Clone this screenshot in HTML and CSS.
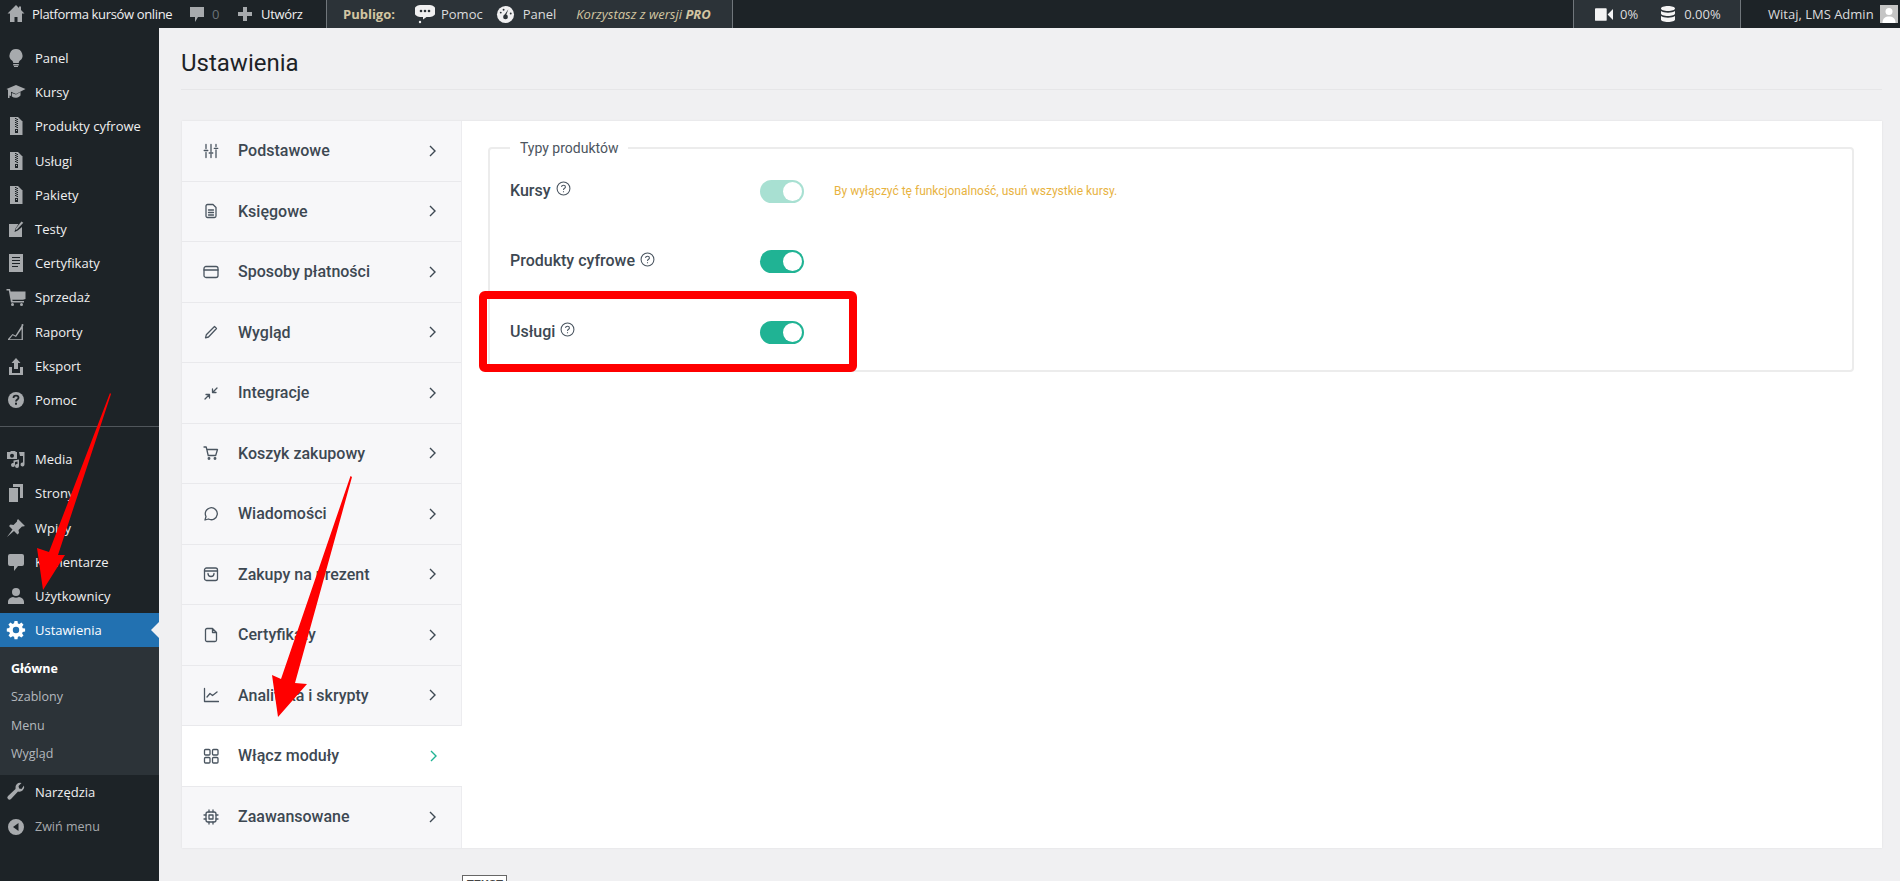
FILE: index.html
```html
<!DOCTYPE html>
<html lang="pl">
<head>
<meta charset="utf-8">
<title>Ustawienia</title>
<link rel="stylesheet" href="styles.css">
</head>
<body>
<header class="topbar">
  <div class="tb-group tb-site">
    <svg class="tb-icon home" viewBox="0 0 20 20"><path d="M10 1 1.5 9.5H4V18h4.5v-5h3v5H16V9.500h2.500L15 6V2.500h-2v1.500z"/></svg>
    <span>Platforma kursów online</span>
  </div>
  <div class="tb-group tb-comments">
    <svg class="tb-icon" viewBox="0 0 20 20"><path d="M3 3h14v10h-6l-3 5v-5H3z"/></svg>
    <span class="muted">0</span>
  </div>
  <div class="tb-group tb-new">
    <svg class="tb-icon" viewBox="0 0 20 20"><path d="M8 3h4v5h5v4h-5v5H8v-5H3V8h5z"/></svg>
    <span>Utwórz</span>
  </div>
  <div class="tb-publigo">
    <strong class="tan">Publigo:</strong>
    <span class="tb-item help-item"><svg class="tb-icon large" viewBox="0 0 20 20"><path d="M5 1h10a5 5 0 0 1 0 12h-3.500L8 15.500V13H5A5 5 0 0 1 5 1z"/><circle cx="6" cy="7" r="1.300" fill="#2c3338"/><circle cx="10" cy="7" r="1.300" fill="#2c3338"/><circle cx="14" cy="7" r="1.300" fill="#2c3338"/><circle cx="5" cy="18" r="1.200"/></svg>Pomoc</span>
    <span class="tb-item panel-item"><svg class="tb-icon gauge" viewBox="0 0 20 20"><circle cx="10" cy="10" r="9"/><path d="M13 4.500 10.500 11 8.800 10.500z" fill="#2c3338"/><circle cx="10" cy="12.500" r="2.500" fill="#2c3338"/><circle cx="5" cy="8" r="1" fill="#2c3338"/><circle cx="8" cy="5" r="1" fill="#2c3338"/><circle cx="15.500" cy="9" r="1" fill="#2c3338"/></svg>Panel</span>
    <em class="tan pro">Korzystasz z wersji <b>PRO</b></em>
  </div>
  <div class="tb-spacer"></div>
  <div class="tb-stats">
    <span class="tb-stat"><svg class="tb-icon video" viewBox="0 0 20 14"><rect x="0" y="0" width="13" height="14" rx="1"/><path d="M20 1v12l-6-6z"/></svg>0%</span>
    <span class="tb-stat"><svg class="tb-icon db" viewBox="0 0 14 16"><path d="M0 2.500C0 1 3 0 7 0s7 1 7 2.500S11 5 7 5 0 4 0 2.500zM0 5c1.500 1.200 4 1.700 7 1.700S12.500 6.200 14 5v2.500C14 9 11 10 7 10S0 9 0 7.500zM0 10c1.500 1.200 4 1.700 7 1.700s5.500-.5 7-1.700v3.500C14 15 11 16 7 16s-7-1-7-2.500z"/></svg>0.00%</span>
  </div>
  <div class="tb-user">
    <span>Witaj, LMS Admin</span>
    <svg class="avatar" viewBox="0 0 18 18"><rect width="18" height="18" fill="#c4c4c4"/><circle cx="9" cy="6.500" r="3.500" fill="#fff"/><path d="M2.500 18c0-5 3-6.500 6.500-6.500s6.500 1.500 6.500 6.500z" fill="#fff"/></svg>
  </div>
</header>

<div class="layout">
  <nav class="sidebar">
    <ul class="menu">
      <li class="menu-item"><svg class="mi" viewBox="0 0 20 20"><path d="M10 1a6.500 6.500 0 0 0-4 11.600c.9.700 1.200 1.500 1.200 2.400h5.600c0-.9.300-1.700 1.200-2.400A6.500 6.500 0 0 0 10 1zM7.200 16h5.600v1.500H7.200zM8 18h4v1H8z"/></svg>Panel</li>
      <li class="menu-item"><svg class="mi" viewBox="0 0 20 20"><path d="M10 3 .5 7 2 7.700V16h1.500v-2.500L5 14V9.700l5 2.300 9.500-5zM5.800 11v3.500c1.500 1 3 1.400 4.700 1.200 1.500-.2 3-1 4-2.200v-3.600L10 12.600z"/></svg>Kursy</li>
      <li class="menu-item"><svg class="mi" viewBox="0 0 20 20"><use href="#zip"/></svg>Produkty cyfrowe</li>
      <li class="menu-item"><svg class="mi" viewBox="0 0 20 20"><use href="#zip"/></svg>Usługi</li>
      <li class="menu-item"><svg class="mi" viewBox="0 0 20 20"><use href="#zip"/></svg>Pakiety</li>
      <li class="menu-item"><svg class="mi" viewBox="0 0 20 20"><path d="M3 5h9.500L9.500 9.500 8.500 13l3.300-1.500L16 8v10H3z"/><path d="M15.500 2.500l1.800 1.300-6.300 6.700-1.500.6.300-1.600z"/></svg>Testy</li>
      <li class="menu-item"><svg class="mi" viewBox="0 0 20 20"><path fill-rule="evenodd" d="M3 1h14v18H3zM6 4v1h8V4zm0 3v1h8V7zm0 3v1h8v-1zm0 3v1h6v-1z"/></svg>Certyfikaty</li>
      <li class="menu-item"><svg class="mi" viewBox="0 0 20 20"><path d="M.5 2H4l.6 2.500H19.500V12l-2.500.8H6.300l.3 1.200H18v1.500H5L2.800 3.500H.5z"/><circle cx="6.500" cy="17.500" r="1.500"/><circle cx="15.500" cy="17.500" r="1.500"/></svg>Sprzedaż</li>
      <li class="menu-item"><svg class="mi" viewBox="0 0 20 20"><path d="M2 18v-1l4.500-5 3 1.500 6.500-10.500.9.400V18zm1.600-.8h12V7l-5.600 8-3.300-1.700z"/><circle cx="16.500" cy="3" r="1"/></svg>Raporty</li>
      <li class="menu-item"><svg class="mi" viewBox="0 0 20 20"><path d="M10 2l4.500 5H12v6H8V7H5.500zM3 11h3v6h8v-6h3v8H3z"/></svg>Eksport</li>
      <li class="menu-item"><svg class="mi" viewBox="0 0 20 20"><circle cx="10" cy="10" r="8"/><path d="M7.500 8c0-1.500 1-2.300 2.500-2.300s2.500.8 2.500 2.100c0 1.700-2.500 1.800-2.500 3.700" fill="none" stroke="#1d2327" stroke-width="1.800"/><rect x="9" y="12.700" width="2" height="2" fill="#1d2327"/></svg>Pomoc</li>
    </ul>
    <div class="menu-sep"></div>
    <ul class="menu">
      <li class="menu-item"><svg class="mi" viewBox="0 0 20 20"><path fill-rule="evenodd" d="M1 3h3l1-1h4l1 1h1v7H1zm5 1.800a2 2 0 1 0 0 4 2 2 0 0 0 0-4z"/><path d="M13 3h5.500v12.500a2 2 0 1 1-1.500-2V7h-3zM7.500 11.500l5.500-1v6.500a2 2 0 1 1-1.500-2v-2.500l-2.500.5v3a2 2 0 1 1-1.500-2z"/></svg>Media</li>
      <li class="menu-item"><svg class="mi" viewBox="0 0 20 20"><path d="M7 1h10v14h-3V4H7zM3 5h9v14H3z"/></svg>Strony</li>
      <li class="menu-item"><svg class="mi" viewBox="0 0 20 20"><path d="M12 1l7 7-2 .5-1 0-3.500 3.500.5 3-1.500 1.500-3.500-3.500L1 19l5.500-7.500L3 8l1.500-1.500 3 .5L11 3.500V2.500z"/></svg>Wpisy</li>
      <li class="menu-item"><svg class="mi" viewBox="0 0 20 20"><path d="M4 2h12a2 2 0 0 1 2 2v8a2 2 0 0 1-2 2h-4l-4 5v-5H4a2 2 0 0 1-2-2V4a2 2 0 0 1 2-2z"/></svg>Komentarze</li>
      <li class="menu-item"><svg class="mi" viewBox="0 0 20 20"><circle cx="10" cy="6" r="4"/><path d="M2 18v-2c0-3 2.500-4.500 5-5 1.800 1 4.200 1 6 0 2.500.5 5 2 5 5v2z"/></svg>Użytkownicy</li>
      <li class="menu-item current"><svg class="mi" viewBox="0 0 20 20"><path fill-rule="evenodd" d="M8.500 1h3l.4 2.400 1.500.6 2-1.400 2.100 2.100-1.400 2 .6 1.500 2.400.4v3l-2.400.4-.6 1.500 1.400 2-2.100 2.100-2-1.400-1.500.6-.4 2.400h-3l-.4-2.400-1.500-.6-2 1.400-2.100-2.100 1.400-2-.6-1.500L.8 11.500v-3l2.400-.4.6-1.500-1.400-2 2.100-2.100 2 1.400 1.500-.6zM10 6.800a3.200 3.200 0 1 0 0 6.400 3.200 3.200 0 0 0 0-6.400z"/></svg>Ustawienia</li>
      <li>
        <ul class="submenu">
          <li class="sub-item active">Główne</li>
          <li class="sub-item">Szablony</li>
          <li class="sub-item">Menu</li>
          <li class="sub-item">Wygląd</li>
        </ul>
      </li>
      <li class="menu-item"><svg class="mi" viewBox="0 0 20 20"><path d="M18 3.500a4.800 4.800 0 0 1-6 6L5 17a2.100 2.100 0 0 1-3-3l7.500-7a4.800 4.800 0 0 1 6-6l-3 3 .6 2.400 2.400.6z"/></svg>Narzędzia</li>
      <li class="menu-item collapse"><svg class="mi" viewBox="0 0 20 20"><path fill-rule="evenodd" d="M10 2a8 8 0 1 1 0 16 8 8 0 0 1 0-16zm2.500 4L7 10l5.500 4z"/></svg>Zwiń menu</li>
    </ul>
  </nav>

  <main class="main">
    <h1 class="page-title">Ustawienia</h1>
    <section class="card">
      <ul class="tabs">
        <li class="tab"><svg class="ti" viewBox="0 0 16 16"><path d="M3 1.500v4M3 9.500v5M1.200 7.500h3.600M8 1.500v7M8 11.500v3M6.200 10h3.600M13 1.500v2M13 7v7.500M11.200 5.300h3.600"/></svg><span>Podstawowe</span><svg class="chev" viewBox="0 0 10 14"><path d="M2 2l5 5-5 5"/></svg></li>
        <li class="tab"><svg class="ti" viewBox="0 0 16 16"><path d="M3 3a1.500 1.500 0 0 1 1.500-1.500H10L13 4.500V13a1.500 1.500 0 0 1-1.500 1.500h-7A1.500 1.500 0 0 1 3 13zM5.500 7h5M5.500 9.500h5M5.500 12h5"/></svg><span>Księgowe</span><svg class="chev" viewBox="0 0 10 14"><path d="M2 2l5 5-5 5"/></svg></li>
        <li class="tab"><svg class="ti" viewBox="0 0 16 16"><rect x="1" y="2.500" width="14" height="11" rx="2"/><path d="M1 6h14"/></svg><span>Sposoby płatności</span><svg class="chev" viewBox="0 0 10 14"><path d="M2 2l5 5-5 5"/></svg></li>
        <li class="tab"><svg class="ti" viewBox="0 0 16 16"><path d="M11.500 2.500l2 2-8 8.500-3 .8.800-3z"/></svg><span>Wygląd</span><svg class="chev" viewBox="0 0 10 14"><path d="M2 2l5 5-5 5"/></svg></li>
        <li class="tab"><svg class="ti" viewBox="0 0 16 16"><path d="M2 14l4.500-4.500M3 9.500h3.500V13M14 3L9.500 7.500M13 7.500H9.500V4"/></svg><span>Integracje</span><svg class="chev" viewBox="0 0 10 14"><path d="M2 2l5 5-5 5"/></svg></li>
        <li class="tab"><svg class="ti" viewBox="0 0 16 16"><path d="M1 2h2.200l2 8.500h7.500L14.500 4.500H3.700"/><circle cx="6" cy="13.500" r=".8"/><circle cx="12" cy="13.500" r=".8"/></svg><span>Koszyk zakupowy</span><svg class="chev" viewBox="0 0 10 14"><path d="M2 2l5 5-5 5"/></svg></li>
        <li class="tab"><svg class="ti" viewBox="0 0 16 16"><path d="M2 14l1-3.500A6 6 0 1 1 5.500 13z"/></svg><span>Wiadomości</span><svg class="chev" viewBox="0 0 10 14"><path d="M2 2l5 5-5 5"/></svg></li>
        <li class="tab"><svg class="ti" viewBox="0 0 16 16"><rect x="1.500" y="2" width="13" height="12.500" rx="2"/><path d="M1.500 5h13M5 7.500c0 4 6 4 6 0"/></svg><span>Zakupy na prezent</span><svg class="chev" viewBox="0 0 10 14"><path d="M2 2l5 5-5 5"/></svg></li>
        <li class="tab"><svg class="ti" viewBox="0 0 16 16"><path d="M2.500 3a1.500 1.500 0 0 1 1.500-1.500h5.500l4 4V13a1.500 1.500 0 0 1-1.500 1.500H4A1.500 1.500 0 0 1 2.500 13zM9.500 1.500v4h4"/></svg><span>Certyfikaty</span><svg class="chev" viewBox="0 0 10 14"><path d="M2 2l5 5-5 5"/></svg></li>
        <li class="tab"><svg class="ti" viewBox="0 0 16 16"><path d="M1.500 1.500v13h14M4 10l3-3.500 2.500 2L14 5"/></svg><span>Analityka i skrypty</span><svg class="chev" viewBox="0 0 10 14"><path d="M2 2l5 5-5 5"/></svg></li>
        <li class="tab selected"><svg class="ti" viewBox="0 0 16 16"><rect x="1.500" y="1.500" width="5.500" height="5.500" rx="1"/><rect x="9.500" y="1.500" width="5.500" height="5.500" rx="1"/><rect x="1.500" y="9.500" width="5.500" height="5.500" rx="1"/><rect x="9.500" y="9.500" width="5.500" height="5.500" rx="1"/></svg><span>Włącz moduły</span><svg class="chev" viewBox="0 0 10 14"><path d="M2 2l5 5-5 5"/></svg></li>
        <li class="tab"><svg class="ti" viewBox="0 0 16 16"><rect x="3" y="3" width="10" height="10" rx="2"/><rect x="6" y="6" width="4" height="4"/><path d="M6 1v2M10 1v2M6 13v2M10 13v2M1 6h2M1 10h2M13 6h2M13 10h2"/></svg><span>Zaawansowane</span><svg class="chev" viewBox="0 0 10 14"><path d="M2 2l5 5-5 5"/></svg></li>
      </ul>
      <div class="pane">
        <fieldset class="group">
          <legend>Typy produktów</legend>
          <div class="row">
            <div class="row-label"><span class="label-text">Kursy</span><svg class="help" viewBox="0 0 14 14"><circle cx="7" cy="7" r="6"/><path d="M5.200 5.500C5.200 4.500 6 4 7 4s1.800.6 1.800 1.500C8.800 6.800 7 6.800 7 8.300M7 9.600v.8"/></svg></div>
            <div class="toggle disabled"><i></i></div>
            <p class="hint">By wyłączyć tę funkcjonalność, usuń wszystkie kursy.</p>
          </div>
          <div class="row">
            <div class="row-label"><span class="label-text">Produkty cyfrowe</span><svg class="help" viewBox="0 0 14 14"><circle cx="7" cy="7" r="6"/><path d="M5.200 5.500C5.200 4.500 6 4 7 4s1.800.6 1.800 1.500C8.800 6.800 7 6.800 7 8.300M7 9.600v.8"/></svg></div>
            <div class="toggle"><i></i></div>
          </div>
          <div class="row">
            <div class="row-label"><span class="label-text">Usługi</span><svg class="help" viewBox="0 0 14 14"><circle cx="7" cy="7" r="6"/><path d="M5.200 5.500C5.200 4.500 6 4 7 4s1.800.6 1.800 1.500C8.800 6.800 7 6.800 7 8.300M7 9.600v.8"/></svg></div>
            <div class="toggle"><i></i></div>
          </div>
        </fieldset>
      </div>
    </section>
    <div class="peek"><span>TEKST</span></div>
  </main>
</div>

<div class="highlight"></div>
<svg class="arrows" viewBox="0 0 1900 881">
  <path d="M110 393 111 394 58 555 65 555 43 590 37 548 49 552z"/>
  <path d="M350.500 476 352 477 295 683 307 684 278 717 272 675 281 679z"/>
</svg>

<svg class="defs" width="0" height="0">
  <symbol id="zip" viewBox="0 0 20 20">
    <path d="M4 1h8l4.500 4.500V19H4z"/>
    <path d="M9 2v1h1.500V2zm1.500 1v1H12V3zM9 4v1h1.500V4zm1.500 1v1H12V5zM9 6v1h1.500V6zm1.500 1v1H12V7zM9 8v1h1.500V8zm1.500 1v1H12V9zM9 10v1h1.500v-1zm1.500 1v1H12v-1zM9 13h3v4H9zm1 1v1h1v-1z" fill="#1d2327"/>
  </symbol>
</svg>
</body>
</html>
```

FILE: styles.css
```css
* { box-sizing: border-box; }
html, body { margin: 0; height: 881px; overflow: hidden; }
body { background: #f0f0f2; font-family: "Open Sans", "Liberation Sans", sans-serif; color: #3c434a; position: relative; }
ul { list-style: none; margin: 0; padding: 0; }

.topbar { height: 28px; background: #1d2327; color: #f0f0f1; display: flex; align-items: stretch; font-size: 13px; line-height: 28px; }
.tb-group { display: flex; align-items: center; }
.tb-icon { fill: #a7aaad; width: 20px; height: 20px; flex: none; }
.tb-site { padding-left: 6px; gap: 6px; width: 181px; }
.tb-site span { white-space: nowrap; letter-spacing: -.35px; }
.tb-comments { width: 49px; gap: 5px; padding-left: 6px; }
.muted { color: #6a7278; }
.tb-new { gap: 6px; width: 96px; padding-left: 5px; letter-spacing: -.3px; }
.tb-publigo { width: 407px; background: #2c3338; border-left: 1px solid #70767b; border-right: 1px solid #70767b; display: flex; align-items: center; padding-left: 16px; }
.tan { color: #d3c6a2; }
.tb-publigo strong { font-family: "Open Sans", sans-serif; font-weight: 700; margin-right: 20px; }
.tb-item { display: flex; align-items: center; gap: 6px; color: #dcdcde; }
.help-item { margin-right: 13px; }
.panel-item { gap: 8px; margin-right: 16px; }
.tb-item .tb-icon { fill: #f0f0f1; }
.tb-icon.gauge { width: 19px; height: 19px; }
.pro { font-size: 13px; margin-left: 4px; }
.pro b { font-weight: 700; }
.tb-spacer { flex: 1; }
.tb-stats { width: 168px; background: #2c3338; border-left: 1px solid #70767b; border-right: 1px solid #70767b; display: flex; align-items: center; padding-left: 21px; gap: 23px; }
.tb-stat { display: flex; align-items: center; gap: 7px; color: #dcdcde; }
.tb-stat .tb-icon { fill: #f4f4f4; }
.tb-icon.video { width: 18px; height: 13px; }
.tb-icon.db { width: 14px; height: 18px; margin-right: 2px; }
.tb-user { display: flex; align-items: center; gap: 6px; width: 159px; padding-left: 27px; color: #dcdcde; }
.avatar { width: 18px; height: 18px; }

.layout { display: flex; height: 853px; }
.sidebar { width: 159px; flex: none; background: #1d2327; padding-top: 13px; color: #f0f0f1; font-size: 13px; }
.menu-item { height: 34.200px; display: flex; align-items: center; padding-left: 6px; gap: 9px; position: relative; white-space: nowrap; }
.mi { width: 20px; height: 20px; fill: #a7aaad; flex: none; }
.menu-sep { height: 1px; background: #50565b; margin: 9px 0 15px; }
.menu-item.current { background: #2271b1; color: #fff; }
.menu-item.current .mi { fill: #fff; }
.menu-item.current::after { content: ""; position: absolute; right: 0; top: 9px; border: 8px solid transparent; border-right-color: #f0f0f2; border-left: 0; }
.submenu { background: #2c3338; padding: 8px 0 7px; }
.sub-item { height: 28.300px; line-height: 28px; padding-left: 11px; font-size: 12.500px; color: #b4b9be; }
.sub-item.active { color: #fff; font-weight: 700; }
.menu-item.collapse { color: #a7aaad; font-size: 12.500px; }

.main { flex: 1; min-width: 0; padding: 0 18px 0 22px; }
.page-title { margin: 0 0 31px; height: 62px; font: 400 24px/70px Roboto, sans-serif; color: #1d2327; border-bottom: 1px solid #e6e6e8; padding: 0; }
.card { margin-left: 1px; display: flex; height: 727px; background: #fff; box-shadow: 0 0 2px rgba(0, 0, 0, .08); font-family: Roboto, sans-serif; }
.tabs { width: 280px; flex: none; background: #f7f7f9; border-right: 1px solid #ececef; }
.tab { height: 60.500px; display: flex; align-items: center; padding: 0 23px 0 21px; border-bottom: 1px solid #e9e9ec; font-size: 16px; font-weight: 500; color: #3d4852; }
.tab:last-child { border-bottom: 0; }
.tab.selected { background: #fff; margin-right: -1px; }
.tab span { flex: 1; margin-left: 19px; }
.ti { width: 16px; height: 16px; fill: none; stroke: #4a5560; stroke-width: 1.300; stroke-linecap: round; stroke-linejoin: round; flex: none; }
.chev { width: 10px; height: 14px; fill: none; stroke: #3d4852; stroke-width: 1.400; flex: none; }
.tab.selected .chev { stroke: #20b394; }

.pane { flex: 1; padding: 19px 28px 0 26px; }
.group { margin: 0; height: 232px; border: 2px solid #ececec; border-radius: 4px; padding: 0 0 0 20px; min-width: 0; }
.group legend { margin-left: 0; padding: 0 10px; font-size: 14px; line-height: 16px; color: #4c5560; }
.row { display: flex; align-items: center; height: 70.500px; }
.row-label { width: 250px; font-size: 16px; font-weight: 500; color: #3d4852; display: flex; align-items: center; padding-bottom: 2px; }
.help { width: 15px; height: 15px; margin: -3px 0 0 5px; fill: none; stroke: #4a5560; stroke-width: 1; }
.toggle { width: 44px; height: 23px; border-radius: 12px; background: #20b394; padding: 2px; display: flex; justify-content: flex-end; }
.toggle i { display: block; width: 19px; height: 19px; border-radius: 50%; background: #fff; }
.toggle.disabled { background: #a8e0d2; }
.hint { margin: 0 0 0 30px; font-size: 12px; color: #e8b33f; }

.peek { margin: 27px 0 0 281px; width: 45px; height: 24px; background: #fff; border: 1px solid #666; padding: 1px 4px; font: 700 11px/14px "Liberation Sans", sans-serif; color: #444; overflow: hidden; }

.highlight { position: absolute; left: 479px; top: 291px; width: 378px; height: 81px; border: 8px solid #f00; border-radius: 6px; }
.arrows { position: absolute; left: 0; top: 0; width: 1900px; height: 881px; fill: #f00; pointer-events: none; }
.defs { position: absolute; }
```
